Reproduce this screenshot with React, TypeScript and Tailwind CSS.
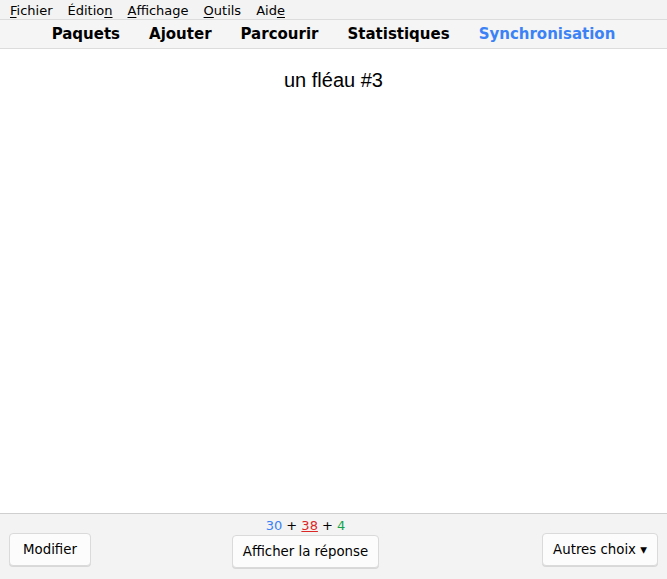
const menus: [string, string, string][] = [
  ["", "F", "ichier"],
  ["Éditio", "n", ""],
  ["", "A", "ffichage"],
  ["", "O", "utils"],
  ["Aid", "e", ""],
];

const tabs = ["Paquets", "Ajouter", "Parcourir", "Statistiques", "Synchronisation"];

export default function App() {
  return (
    <div className="flex h-[579px] w-[667px] flex-col overflow-hidden bg-white font-['DejaVu_Sans',sans-serif] text-black">
      {/* Menu bar */}
      <div className="flex h-[19px] items-center gap-[15px] bg-[#f3f3f3] pl-[10px] pt-[2px] text-[13px] leading-none">
        {menus.map(([a, u, b]) => (
          <span key={a + u + b}>
            {a}
            <span className="underline underline-offset-2">{u}</span>
            {b}
          </span>
        ))}
      </div>

      {/* Top toolbar */}
      <div className="flex h-[30px] items-center justify-center gap-[29px] border-y border-[#dcdcdc] bg-[#f5f5f5] text-[15px] font-bold">
        {tabs.map((t) => (
          <span key={t} className={t === "Synchronisation" ? "text-[#3b82f6]" : ""}>
            {t}
          </span>
        ))}
      </div>

      {/* Card */}
      <div className="flex-1 bg-white pt-[19px] text-center font-['Liberation_Sans',sans-serif] text-[20px] leading-[24px]">
        un fléau #3
      </div>

      {/* Bottom bar */}
      <div className="flex h-[66px] items-start justify-between border-t border-[#cfcfcf] bg-[#f3f3f3] px-[9px] text-[13.33px]">
        <button className="mt-[19px] h-[33px] w-[82px] rounded-[4px] border border-[#dadada] bg-[#fcfcfc] shadow-[0_1px_0_#d8d8d8]">
          Modifier
        </button>
        <div className="mr-[22px] flex flex-col items-center pt-[3px]">
          <div className="text-[13px] leading-[17px]">
            <span className="text-[#3b82f6]">30</span> + <span className="text-[#dc2626] underline">38</span> +{" "}
            <span className="text-[#16a34a]">4</span>
          </div>
          <button className="mt-[1px] h-[33px] w-[147px] rounded-[4px] border border-[#dadada] bg-[#fcfcfc] shadow-[0_1px_0_#d8d8d8]">
            Afficher la réponse
          </button>
        </div>
        <button className="mt-[19px] h-[33px] w-[116px] rounded-[4px] border border-[#dadada] bg-[#fcfcfc] shadow-[0_1px_0_#d8d8d8]">
          Autres choix ▾
        </button>
      </div>
    </div>
  );
}
